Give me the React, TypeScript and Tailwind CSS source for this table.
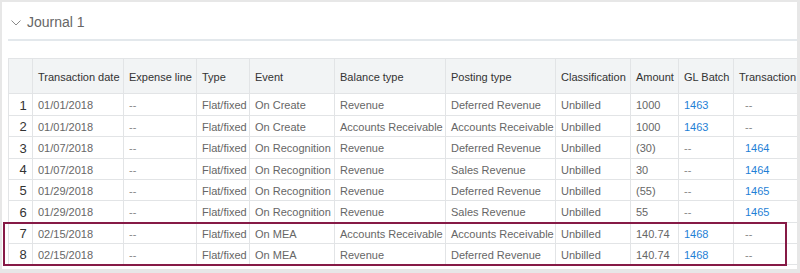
import React from "react";

type Row = {
  date: string;
  type: string;
  event: string;
  balance: string;
  posting: string;
  amount: string;
  gl: string;
  tx: string;
};

const rows: Row[] = [
  { date: "01/01/2018", type: "Flat/fixed", event: "On Create", balance: "Revenue", posting: "Deferred Revenue", amount: "1000", gl: "1463", tx: "--" },
  { date: "01/01/2018", type: "Flat/fixed", event: "On Create", balance: "Accounts Receivable", posting: "Accounts Receivable", amount: "1000", gl: "1463", tx: "--" },
  { date: "01/07/2018", type: "Flat/fixed", event: "On Recognition", balance: "Revenue", posting: "Deferred Revenue", amount: "(30)", gl: "--", tx: "1464" },
  { date: "01/07/2018", type: "Flat/fixed", event: "On Recognition", balance: "Revenue", posting: "Sales Revenue", amount: "30", gl: "--", tx: "1464" },
  { date: "01/29/2018", type: "Flat/fixed", event: "On Recognition", balance: "Revenue", posting: "Deferred Revenue", amount: "(55)", gl: "--", tx: "1465" },
  { date: "01/29/2018", type: "Flat/fixed", event: "On Recognition", balance: "Revenue", posting: "Sales Revenue", amount: "55", gl: "--", tx: "1465" },
  { date: "02/15/2018", type: "Flat/fixed", event: "On MEA", balance: "Accounts Receivable", posting: "Accounts Receivable", amount: "140.74", gl: "1468", tx: "--" },
  { date: "02/15/2018", type: "Flat/fixed", event: "On MEA", balance: "Revenue", posting: "Deferred Revenue", amount: "140.74", gl: "1468", tx: "--" },
];

const rowH = ["h-[22px]", "h-[21px]", "h-[22px]", "h-[21px]", "h-[21px]", "h-[22px]", "h-[21px]", "h-[21px]"];

const cell = "shrink-0 border-r border-[#e2e4e6] flex items-center pl-[5px] whitespace-nowrap overflow-hidden";

function Val({ v, link }: { v: string; link?: boolean }) {
  if (v === "--") return <span className="text-[#888]">--</span>;
  return <span className={link ? "text-[#1f7fd6]" : ""}>{v}</span>;
}

export default function App() {
  return (
    <div
      className="w-[800px] h-[273px] bg-[#e7e7e7] pt-[2px] pl-[2px] pr-[3px] pb-[4px]"
      style={{ fontFamily: '"Liberation Sans", Arial, sans-serif' }}
    >
      <div className="relative h-full bg-white overflow-hidden">
        <div className="h-[37px] flex items-center pl-[9px] pt-[3px] gap-[6px]">
          <svg width="10" height="6" viewBox="0 0 10 6" className="mt-[1px]">
            <polyline points="0.5,0.5 5,5 9.5,0.5" fill="none" stroke="#8a8a8a" strokeWidth="1" />
          </svg>
          <span className="text-[14px] text-[#666]">Journal 1</span>
        </div>
        <div className="ml-[6px] h-[2px] bg-[#e3e8ec]" />
        <div className="ml-[6px] mt-[17px] w-[900px] border-l border-[#e2e4e6] text-[11px]">
          <div className="flex h-[36px] bg-[#f2f4f5] border-t border-b border-[#e2e4e6] text-[#333]">
            <div className={`${cell} w-[24px]`} />
            <div className={`${cell} w-[91px] pt-[2px]`}>Transaction date</div>
            <div className={`${cell} w-[73px] pt-[2px]`}>Expense line</div>
            <div className={`${cell} w-[53px] pt-[2px]`}>Type</div>
            <div className={`${cell} w-[85px] pt-[2px]`}>Event</div>
            <div className={`${cell} w-[111px] pt-[2px]`}>Balance type</div>
            <div className={`${cell} w-[110px] pt-[2px]`}>Posting type</div>
            <div className={`${cell} w-[75px] pt-[2px]`}>Classification</div>
            <div className={`${cell} w-[48px] pt-[2px]`}>Amount</div>
            <div className={`${cell} w-[55px] pt-[2px]`}>GL Batch</div>
            <div className={`${cell} w-[120px] pt-[2px]`}>Transaction</div>
          </div>
          {rows.map((r, i) => (
            <div key={i} className={`flex ${rowH[i]} border-b border-[#e2e4e6] text-[#666]`}>
              <div className={`${cell} w-[24px] justify-center pl-0 pt-[2px] text-[13px] text-[#333]`}>{i + 1}</div>
              <div className={`${cell} w-[91px] pt-[2px]`}>{r.date}</div>
              <div className={`${cell} w-[73px] pt-[2px]`}>
                <Val v="--" />
              </div>
              <div className={`${cell} w-[53px] pl-[4px] pt-[2px]`}>{r.type}</div>
              <div className={`${cell} w-[85px] pt-[2px]`}>{r.event}</div>
              <div className={`${cell} w-[111px] pt-[2px]`}>{r.balance}</div>
              <div className={`${cell} w-[110px] pt-[2px]`}>{r.posting}</div>
              <div className={`${cell} w-[75px] pt-[2px]`}>Unbilled</div>
              <div className={`${cell} w-[48px] pt-[2px]`}>{r.amount}</div>
              <div className={`${cell} w-[55px] pt-[2px]`}>
                <Val v={r.gl} link />
              </div>
              <div className={`${cell} w-[120px] pl-[11px] pt-[2px]`}>
                <Val v={r.tx} link />
              </div>
            </div>
          ))}
        </div>
        <div className="absolute left-[1px] top-[220px] w-[784px] h-[44px] border-2 border-[#861a46]" />
      </div>
    </div>
  );
}
